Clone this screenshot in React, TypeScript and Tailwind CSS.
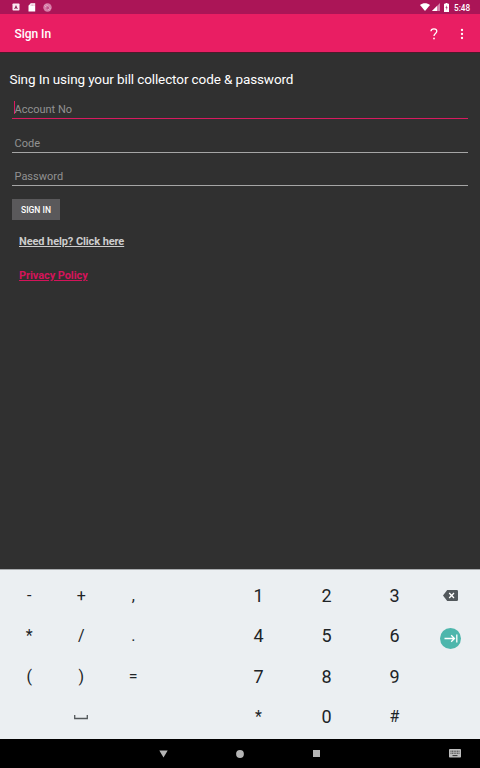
import type { ReactNode } from "react";

function StatusBar() {
  return (
    <div className="flex h-[14px] shrink-0 items-center bg-[#ab1557] pl-[12px] pr-[10px] text-white">
      <svg className="h-[8px] w-[8px]" viewBox="0 0 8 8">
        <rect x="0.5" y="0.5" width="7" height="7" rx="0.8" fill="#fbeaf2" />
        <path d="M4 2 5.8 6H4.9L4 5 3.1 6H2.2Z" fill="#8f2458" />
      </svg>
      <svg className="ml-[8px] h-[9px] w-[8px]" viewBox="0 0 8 9">
        <path d="M2.7 0.3H7.2V8.5H0.5V2.7Z" fill="#fff" />
        <path d="M3.2 1.4v1.5M4.6 1.4v1.5M6 1.4v1.5" stroke="#cf6d9c" strokeWidth="0.6" />
      </svg>
      <svg className="ml-[7px] h-[9px] w-[9px]" viewBox="0 0 9 9">
        <circle cx="4.5" cy="4.5" r="4.2" fill="#d77fa8" />
        <path d="M1.6 2.5 6.4 7.3M3 1.3 7.6 6" stroke="#eab9d0" strokeWidth="0.8" />
        <circle cx="4.7" cy="4.7" r="1.5" fill="#c2528a" />
      </svg>
      <div className="flex-1" />
      <svg className="h-[8px] w-[10px]" viewBox="0 0 10 8">
        <path d="M0 1.9C2.8-.3 7.2-.3 10 1.9L5 8Z" fill="#fff" />
      </svg>
      <svg className="ml-[2px] h-[8px] w-[8px]" viewBox="0 0 8 8">
        <path d="M8 0V8H0Z" fill="#d684ab" />
        <path d="M5 3V8H0Z" fill="#fff" />
      </svg>
      <svg className="ml-[4px] h-[9px] w-[5px]" viewBox="0 0 5 9">
        <path d="M1.5 0h2v.8H5V9H0V.8h1.5Z" fill="#fff" />
        <path d="M2.8 2.2 1.4 5h1v2.2L3.7 4.3H2.8Z" fill="#b33a72" />
      </svg>
      <span className="ml-[5px] w-[16px] whitespace-nowrap pt-px text-[8.2px] font-medium leading-[14px]">5:48</span>
    </div>
  );
}

function AppBar() {
  return (
    <header className="flex h-[38px] shrink-0 items-center bg-[#e91e63] pl-[14.5px] pr-[16px] text-white">
      <h1 className="flex-1 pt-[2px] text-[12px] font-medium leading-[14px] tracking-[-0.05px]">Sign In</h1>
      <svg className="mt-px h-[12px] w-[8px]" viewBox="0 0 8 12" fill="none">
        <path d="M1 3.3C1 1.8 2.2.8 4 .8s2.8 1 2.8 2.5C6.8 5.4 4 5.6 4 8" stroke="#fff" strokeWidth="1.3" />
        <rect x="3.2" y="9.7" width="1.6" height="1.6" fill="#fff" />
      </svg>
      <svg className="ml-[22px] mt-px h-[12px] w-[4px]" viewBox="0 0 4 12" fill="#fff">
        <circle cx="2" cy="2" r="1.15" />
        <circle cx="2" cy="6" r="1.15" />
        <circle cx="2" cy="10" r="1.15" />
      </svg>
    </header>
  );
}

function Field({ label, active = false }: { label: string; active?: boolean }) {
  return (
    <div
      className={
        active
          ? "flex h-[20px] border-b border-[#d81b60] text-[#929292]"
          : "flex h-[20px] border-b border-[#a5a5a5] text-[#929292]"
      }
    >
      <span
        className={
          active
            ? "mt-[2px] ml-[2px] h-[13px] w-px bg-[#d81b60]"
            : "ml-[2px] w-px"
        }
      />
      <span className="-ml-[0.5px] pt-[4px] text-[11px] leading-[13px]">{label}</span>
    </div>
  );
}

const symbolKeys = ["-", "+", ",", "*", "/", ".", "(", ")", "="];
const numberKeys = ["1", "2", "3", "4", "5", "6", "7", "8", "9", "*", "0", "#"];

function Key({ children }: { children: ReactNode }) {
  return <div className="flex items-center justify-center">{children}</div>;
}

function Keyboard() {
  return (
    <div className="flex h-[170px] shrink-0 border-t border-[#a9acae] bg-[#ebeff2] pl-[3px] pt-[6px] text-[#202427]">
      <div className="grid h-[161px] w-[156px] grid-cols-3 grid-rows-4 text-[16px]">
        {symbolKeys.map((k) => (
          <Key key={k}>
            <span className="pl-[0.5px]">{k}</span>
          </Key>
        ))}
        <Key> </Key>
        <Key>
          <svg className="mt-[2px] h-[5px] w-[14px]" viewBox="0 0 14 5" fill="none">
            <path d="M.7 0V3.5H13.3V0" stroke="#53585b" strokeWidth="1.3" />
          </svg>
        </Key>
      </div>
      <div className="ml-[65.5px] grid h-[161px] w-[204px] grid-cols-3 grid-rows-4 text-[18px]">
        {numberKeys.map((k, i) => (
          <Key key={i}>
            <span className={k === "*" || k === "#" ? "text-[16px]" : "-mt-px"}>{k}</span>
          </Key>
        ))}
      </div>
      <div className="grid h-[161px] w-[44px] grid-rows-4">
        <Key>
          <svg className="-mt-[2px] h-[11px] w-[15px]" viewBox="0 0 15 11">
            <path d="M4.2 0H13.8Q15 0 15 1.2V9.8Q15 11 13.8 11H4.2L0 5.5Z" fill="#52585c" />
            <path d="M6.2 3 11 8M11 3 6.2 8" stroke="#fff" strokeWidth="1.3" />
          </svg>
        </Key>
        <Key>
          <span className="mt-[4px] flex h-[21px] w-[21px] items-center justify-center rounded-full bg-[#4db6ac]">
            <svg className="h-[9px] w-[14px]" viewBox="0 0 14 9" fill="none">
              <path d="M.5 4.5H10.5M7.2 1.2 10.5 4.5 7.2 7.8M12.8 .5V8.5" stroke="#fff" strokeWidth="1.3" />
            </svg>
          </span>
        </Key>
      </div>
    </div>
  );
}

function NavBar() {
  return (
    <nav className="flex h-[29px] shrink-0 items-center bg-black pl-[158.5px] pr-[19px]">
      <svg className="h-[8px] w-[9px]" viewBox="0 0 9 8">
        <path d="M.3 .5H8.7L4.5 7.5Z" fill="#b5b5b5" />
      </svg>
      <svg className="ml-[68px] h-[8px] w-[8px]" viewBox="0 0 8 8">
        <circle cx="4" cy="4" r="3.9" fill="#b5b5b5" />
      </svg>
      <span className="ml-[69.5px] h-[7px] w-[7px] bg-[#b5b5b5]" />
      <div className="flex-1" />
      <svg className="h-[9px] w-[12px]" viewBox="0 0 12 9">
        <rect width="12" height="8.5" rx="0.8" fill="#bdbdbd" />
        <path d="M1.5 2.2h9M1.5 4.2h9" stroke="#333" strokeWidth="1" strokeDasharray="1 .6" />
        <path d="M3.5 6.6h5" stroke="#333" strokeWidth="1" />
      </svg>
    </nav>
  );
}

export default function App() {
  return (
    <div className="flex h-[768px] w-[480px] flex-col overflow-hidden bg-[#303030] font-['Roboto','Liberation_Sans',sans-serif]">
      <StatusBar />
      <AppBar />
      <main className="flex flex-1 flex-col items-start border-t border-[#4d1a2b] text-white">
        <p className="ml-[9.5px] mt-[18px] whitespace-nowrap text-[13.5px] leading-[16px] tracking-[-0.11px]">
          Sing In using your bill collector code &amp; password
        </p>
        <div className="ml-[12px] mt-[12px] flex w-[456px] flex-col gap-[13.5px]">
          <Field label="Account No" active />
          <Field label="Code" />
          <Field label="Password" />
        </div>
        <button className="ml-[12px] mt-[13px] h-[21px] w-[48px] bg-[#5a595b] pt-px text-[8.5px] font-medium leading-[20px]">
          SIGN IN
        </button>
        <a className="ml-[19px] mt-[15px] text-[11px] font-bold leading-[13px] tracking-[-0.1px] text-[#cccccc] underline">
          Need help? Click here
        </a>
        <a className="ml-[19px] mt-[21px] text-[11px] font-bold leading-[13px] tracking-[-0.08px] text-[#d3145a] underline">
          Privacy Policy
        </a>
      </main>
      <Keyboard />
      <NavBar />
    </div>
  );
}
